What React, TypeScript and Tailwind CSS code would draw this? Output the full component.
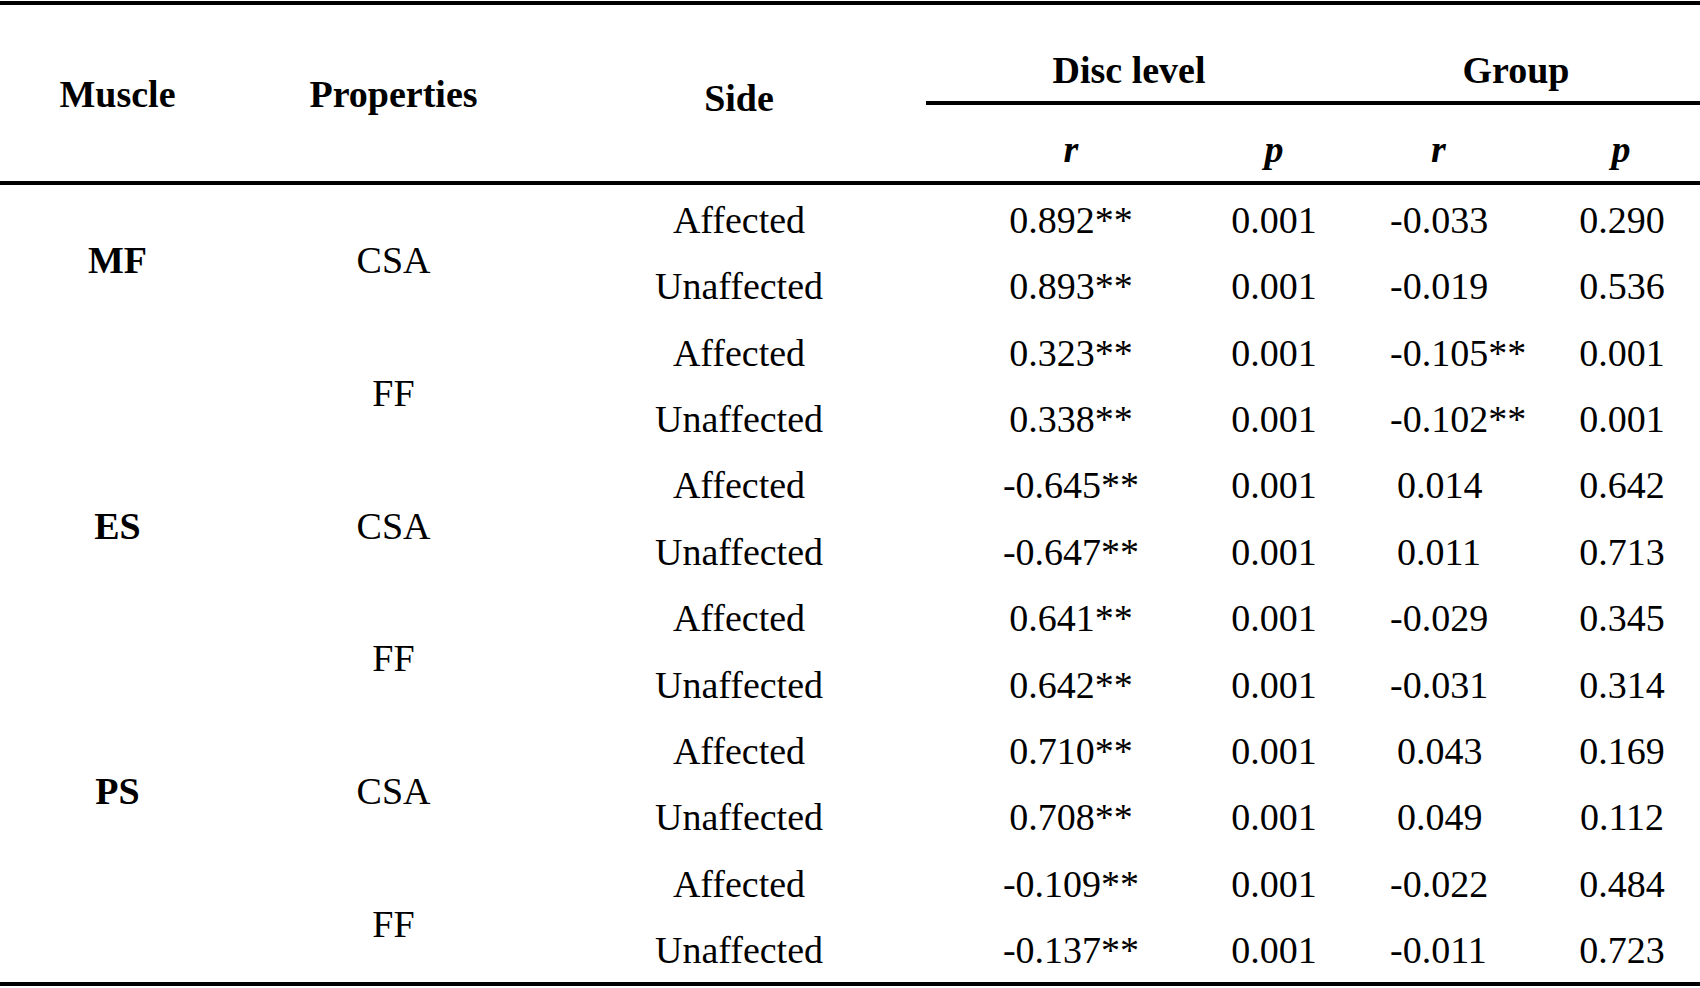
const rows = [
  { side: 'Affected', dr: '0.892**', dp: '0.001', gr: '-0.033', gp: '0.290' },
  { side: 'Unaffected', dr: '0.893**', dp: '0.001', gr: '-0.019', gp: '0.536' },
  { side: 'Affected', dr: '0.323**', dp: '0.001', gr: '-0.105**', gp: '0.001' },
  { side: 'Unaffected', dr: '0.338**', dp: '0.001', gr: '-0.102**', gp: '0.001' },
  { side: 'Affected', dr: '-0.645**', dp: '0.001', gr: '0.014', gp: '0.642' },
  { side: 'Unaffected', dr: '-0.647**', dp: '0.001', gr: '0.011', gp: '0.713' },
  { side: 'Affected', dr: '0.641**', dp: '0.001', gr: '-0.029', gp: '0.345' },
  { side: 'Unaffected', dr: '0.642**', dp: '0.001', gr: '-0.031', gp: '0.314' },
  { side: 'Affected', dr: '0.710**', dp: '0.001', gr: '0.043', gp: '0.169' },
  { side: 'Unaffected', dr: '0.708**', dp: '0.001', gr: '0.049', gp: '0.112' },
  { side: 'Affected', dr: '-0.109**', dp: '0.001', gr: '-0.022', gp: '0.484' },
  { side: 'Unaffected', dr: '-0.137**', dp: '0.001', gr: '-0.011', gp: '0.723' },
]

const muscles = ['MF', 'ES', 'PS']

function Cells({ r }: { r: (typeof rows)[number] }) {
  return (
    <>
      <div className="flex items-center justify-center pt-[4px]">{r.side}</div>
      <div className="flex items-center justify-center pt-[4px]">{r.dr}</div>
      <div className="flex items-center justify-center pt-[4px]">{r.dp}</div>
      <div className={`flex items-center justify-start pt-[4px] ${r.gr.startsWith('-') ? 'pl-[58px]' : 'pl-[65px]'}`}>
        {r.gr}
      </div>
      <div className="flex items-center justify-center pt-[4px]">{r.gp}</div>
    </>
  )
}

export default function App() {
  return (
    <div className="w-[1700px] h-[988px] bg-white text-black font-['Liberation_Serif','Times_New_Roman',serif] text-[38px] leading-normal">
      <div className="h-[1px]" />
      <div className="h-[4px] bg-black" />

      {/* Header */}
      <div className="flex h-[176px]">
        <div className="w-[235px] flex items-center justify-center pt-[2px] font-bold">Muscle</div>
        <div className="w-[317px] flex items-center justify-center pt-[2px] font-bold">Properties</div>
        <div className="w-[374px] flex items-center justify-center pt-[10px] font-bold">Side</div>
        <div className="flex-1 flex flex-col">
          <div className="h-[96px] flex font-bold">
            <div className="w-[406px] flex items-end justify-center pb-[2px]">Disc level</div>
            <div className="flex-1 flex items-end justify-center pb-[2px]">Group</div>
          </div>
          <div className="h-[4px] bg-black" />
          <div className="h-[76px] grid grid-cols-[290px_116px_212px_156px] font-bold italic">
            <div className="flex items-center justify-center pt-[12px]">r</div>
            <div className="flex items-center justify-center pt-[12px]">p</div>
            <div className="flex items-center justify-start pl-[99px] pt-[12px]">r</div>
            <div className="flex items-center justify-center pr-[2px] pt-[12px]">p</div>
          </div>
        </div>
      </div>

      <div className="h-[4px] bg-black" />

      {/* Body */}
      <div className="h-[797px] grid grid-cols-[235px_317px_374px_290px_116px_212px_156px] grid-rows-[repeat(12,1fr)]">
        {muscles.map((m, mi) => {
          const base = mi * 4
          return (
            <div key={m} className="contents">
              <div className="row-span-2 flex items-center justify-center pt-[18px] font-bold">{m}</div>
              <div className="row-span-2 flex items-center justify-center pt-[18px]">CSA</div>
              <Cells r={rows[base]} />
              <Cells r={rows[base + 1]} />
              <div className="row-span-2" />
              <div className="row-span-2 flex items-center justify-center pt-[18px]">FF</div>
              <Cells r={rows[base + 2]} />
              <Cells r={rows[base + 3]} />
            </div>
          )
        })}
      </div>

      <div className="h-[4px] bg-black" />
    </div>
  )
}
